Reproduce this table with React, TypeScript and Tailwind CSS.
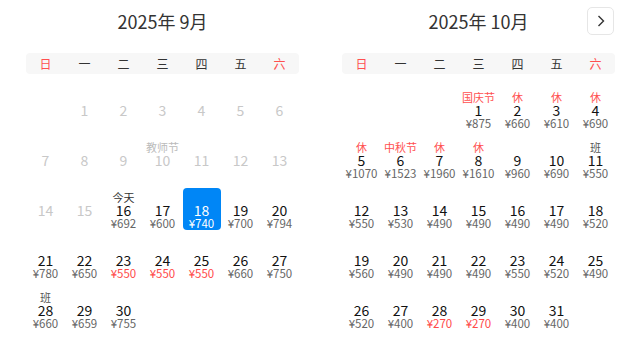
import React from "react";

type Day = {
  d: number;
  price?: string;
  label?: string;
  labelTone?: "red" | "gray" | "dark" | "past";
  past?: boolean;
  cheap?: boolean;
  selected?: boolean;
};

const WEEK = ["日", "一", "二", "三", "四", "五", "六"];

const sep: (Day | null)[] = [
  null,
  ...[1, 2, 3, 4, 5, 6].map((d) => ({ d, past: true })),
  ...[7, 8, 9, 10, 11, 12, 13].map((d) =>
    d === 10 ? { d, past: true, label: "教师节", labelTone: "past" as const } : { d, past: true },
  ),
  { d: 14, past: true },
  { d: 15, past: true },
  { d: 16, price: "692", label: "今天", labelTone: "dark" },
  { d: 17, price: "600" },
  { d: 18, price: "740", selected: true },
  { d: 19, price: "700" },
  { d: 20, price: "794" },
  { d: 21, price: "780" },
  { d: 22, price: "650" },
  { d: 23, price: "550", cheap: true },
  { d: 24, price: "550", cheap: true },
  { d: 25, price: "550", cheap: true },
  { d: 26, price: "660" },
  { d: 27, price: "750" },
  { d: 28, price: "660", label: "班", labelTone: "gray" },
  { d: 29, price: "659" },
  { d: 30, price: "755" },
];

const oct: (Day | null)[] = [
  null,
  null,
  null,
  { d: 1, price: "875", label: "国庆节", labelTone: "red" },
  { d: 2, price: "660", label: "休", labelTone: "red" },
  { d: 3, price: "610", label: "休", labelTone: "red" },
  { d: 4, price: "690", label: "休", labelTone: "red" },
  { d: 5, price: "1070", label: "休", labelTone: "red" },
  { d: 6, price: "1523", label: "中秋节", labelTone: "red" },
  { d: 7, price: "1960", label: "休", labelTone: "red" },
  { d: 8, price: "1610", label: "休", labelTone: "red" },
  { d: 9, price: "960" },
  { d: 10, price: "690" },
  { d: 11, price: "550", label: "班", labelTone: "gray" },
  { d: 12, price: "550" },
  { d: 13, price: "530" },
  { d: 14, price: "490" },
  { d: 15, price: "490" },
  { d: 16, price: "490" },
  { d: 17, price: "490" },
  { d: 18, price: "520" },
  { d: 19, price: "560" },
  { d: 20, price: "490" },
  { d: 21, price: "490" },
  { d: 22, price: "490" },
  { d: 23, price: "550" },
  { d: 24, price: "520" },
  { d: 25, price: "490" },
  { d: 26, price: "520" },
  { d: 27, price: "400" },
  { d: 28, price: "270", cheap: true },
  { d: 29, price: "270", cheap: true },
  { d: 30, price: "400" },
  { d: 31, price: "400" },
];

const labelColor = {
  red: "text-[#ff5050]",
  gray: "text-[#555]",
  dark: "text-[#333]",
  past: "text-[#bbb]",
};

function Cell({ day }: { day: Day | null }) {
  if (!day) return <div className="h-[42px]" />;
  const sel = day.selected;
  return (
    <div
      className={`h-[42px] mx-[0.5px] rounded-[4px] flex flex-col items-center pt-[3px] ${
        sel ? "bg-[#0086f6] text-white" : ""
      }`}
    >
      <div className={`h-[12px] leading-[12px] text-[11px] ${day.label ? labelColor[day.labelTone ?? "gray"] : ""}`}>
        {day.label ?? ""}
      </div>
      <div
        className={`h-[14px] leading-[14px] text-[14px] ${
          sel ? "text-white" : day.past ? "text-[#c8c8c8]" : "text-[#111]"
        }`}
      >
        {day.d}
      </div>
      {day.price && (
        <div
          className={`h-[12px] leading-[12px] text-[11.5px] ${
            sel ? "text-white" : day.cheap ? "text-[#ff4a4a]" : "text-[#666]"
          }`}
        >
          ¥{day.price}
        </div>
      )}
    </div>
  );
}

function Month({ title, days, next }: { title: string; days: (Day | null)[]; next?: boolean }) {
  return (
    <div className="w-[273px]">
      {/* header */}
      <div className="relative h-[42px] flex items-center justify-center">
        <span className="text-[18px] text-[#333] leading-none">{title}</span>
        {next && (
          <button className="absolute right-[1px] top-[7px] w-[27px] h-[28px] rounded-[5px] border border-[#e6e6e6] bg-white flex items-center justify-center">
            <svg width="8" height="12" viewBox="0 0 8 12" fill="none">
              <path d="M1.5 1 L6.5 6 L1.5 11" stroke="#333" strokeWidth="1.4" />
            </svg>
          </button>
        )}
      </div>

      {/* weekdays */}
      <div className="mt-[11px] h-[21px] rounded-[4px] bg-[#f7f7f7] grid grid-cols-7 items-center text-[12px]">
        {WEEK.map((w, i) => (
          <span
            key={w}
            className={`text-center leading-none ${i === 0 || i === 6 ? "text-[#ff5050]" : "text-[#333]"}`}
          >
            {w}
          </span>
        ))}
      </div>

      {/* days */}
      <div className="mt-[14px] grid grid-cols-7 gap-y-[8px]">
        {days.map((d, i) => (
          <Cell key={i} day={d} />
        ))}
      </div>
    </div>
  );
}

export default function App() {
  return (
    <div
      className="w-[640px] h-[348px] bg-white flex pl-[26px] gap-[43px] overflow-hidden"
      style={{ fontFamily: '"Noto Sans CJK SC", "Noto Sans", sans-serif' }}
    >
      <Month title="2025年 9月" days={sep} />
      <Month title="2025年 10月" days={oct} next />
    </div>
  );
}
